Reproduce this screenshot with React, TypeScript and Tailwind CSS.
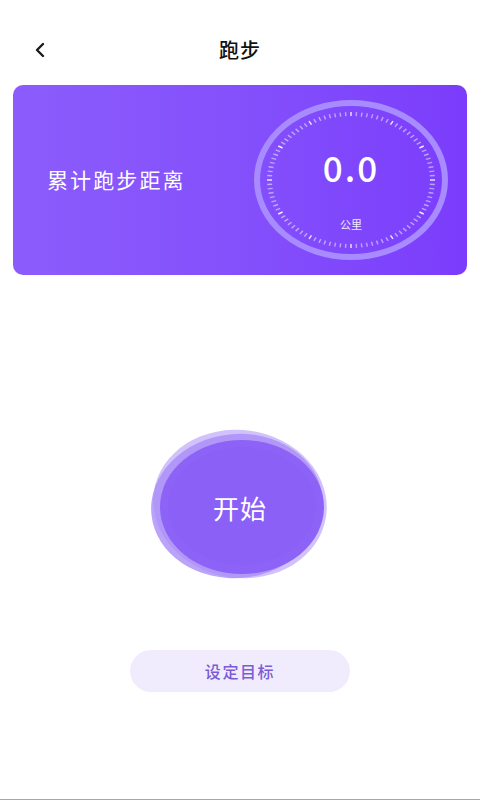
import { ChevronLeft } from 'lucide-react';

function Dial() {
    const ticks = Array.from({ length: 96 }, (_, i) => {
        const a = (i / 96) * Math.PI * 2;
        const cx = 98;
        const cy = 80;
        const r1x = 84;
        const r1y = 68;
        const r2x = 79;
        const r2y = 64;
        return {
            x1: cx + Math.cos(a) * r1x,
            y1: cy + Math.sin(a) * r1y,
            x2: cx + Math.cos(a) * r2x,
            y2: cy + Math.sin(a) * r2y,
            strong: i % 8 === 0,
        };
    });

    return (
        <div className="relative w-[196px] h-[160px]">
            <svg width="196" height="160" viewBox="0 0 196 160" className="absolute inset-0">
                <ellipse cx="98" cy="80" rx="94" ry="77" fill="none" stroke="#a88cff" strokeWidth="6" />
                {ticks.map((t, i) => (
                    <line
                        key={i}
                        x1={t.x1}
                        y1={t.y1}
                        x2={t.x2}
                        y2={t.y2}
                        stroke="#ffffff"
                        strokeOpacity={t.strong ? 0.9 : 0.5}
                        strokeWidth="1.4"
                    />
                ))}
            </svg>
            <div className="absolute inset-0 flex flex-col items-center">
                <span className="mt-[47px] text-[35px] leading-[40px] font-medium text-white tracking-[0.06em]">0.0</span>
                <span className="mt-[30px] text-[11px] leading-[14px] text-white/90">公里</span>
            </div>
        </div>
    );
}

export default function App() {
    return (
        <div
            className="relative w-[480px] h-[800px] bg-white overflow-hidden border-b border-[#a8a8a8]"
            style={{ fontFamily: '"Noto Sans CJK SC", "Noto Sans", sans-serif' }}
        >
            {/* Header */}
            <div className="relative mt-[30px] h-[40px] flex items-center justify-center">
                <ChevronLeft className="absolute left-[28px] w-[24px] h-[24px] text-[#1a1a1a]" strokeWidth={2.4} />
                <span className="text-[20px] font-medium text-[#111] tracking-[0.05em]">跑步</span>
            </div>

            {/* Distance card */}
            <div className="mx-[13px] mt-[15px] h-[190px] rounded-[10px] bg-gradient-to-r from-[#8c5cfb] via-[#8450fb] to-[#7b3cfb] flex items-center justify-between pl-[34px] pr-[18px]">
                <span className="text-[21px] text-white tracking-[0.1em]">累计跑步距离</span>
                <Dial />
            </div>

            {/* Start button */}
            <div className="mt-[155px] flex justify-center">
                <div className="relative w-[178px] h-[150px]">
                    <div className="absolute left-[2px] top-0 w-[174px] h-[148px] rounded-[50%] bg-[#c6b3fa] opacity-80 rotate-[8deg]" />
                    <div className="absolute left-0 top-[4px] w-[172px] h-[144px] rounded-[50%] bg-[#a98cf8] opacity-80 -rotate-[6deg]" />
                    <div className="absolute left-[9px] top-[10px] w-[164px] h-[134px] rounded-[50%] bg-[#8d63f7]" />
                    <div className="absolute left-[17px] top-[17px] w-[148px] h-[118px] rounded-[50%] bg-[#8b60f7]" />
                    <div className="absolute inset-0 flex items-center justify-center">
                        <span className="text-[26px] text-white mt-[4px] tracking-[0.04em]">开始</span>
                    </div>
                </div>
            </div>

            {/* Set goal */}
            <div className="mt-[70px] flex justify-center">
                <button className="w-[220px] h-[42px] rounded-full bg-[#f1ecfd] text-[16px] font-medium text-[#7a5bd5] tracking-[0.1em]">
                    设定目标
                </button>
            </div>
        </div>
    );
}
